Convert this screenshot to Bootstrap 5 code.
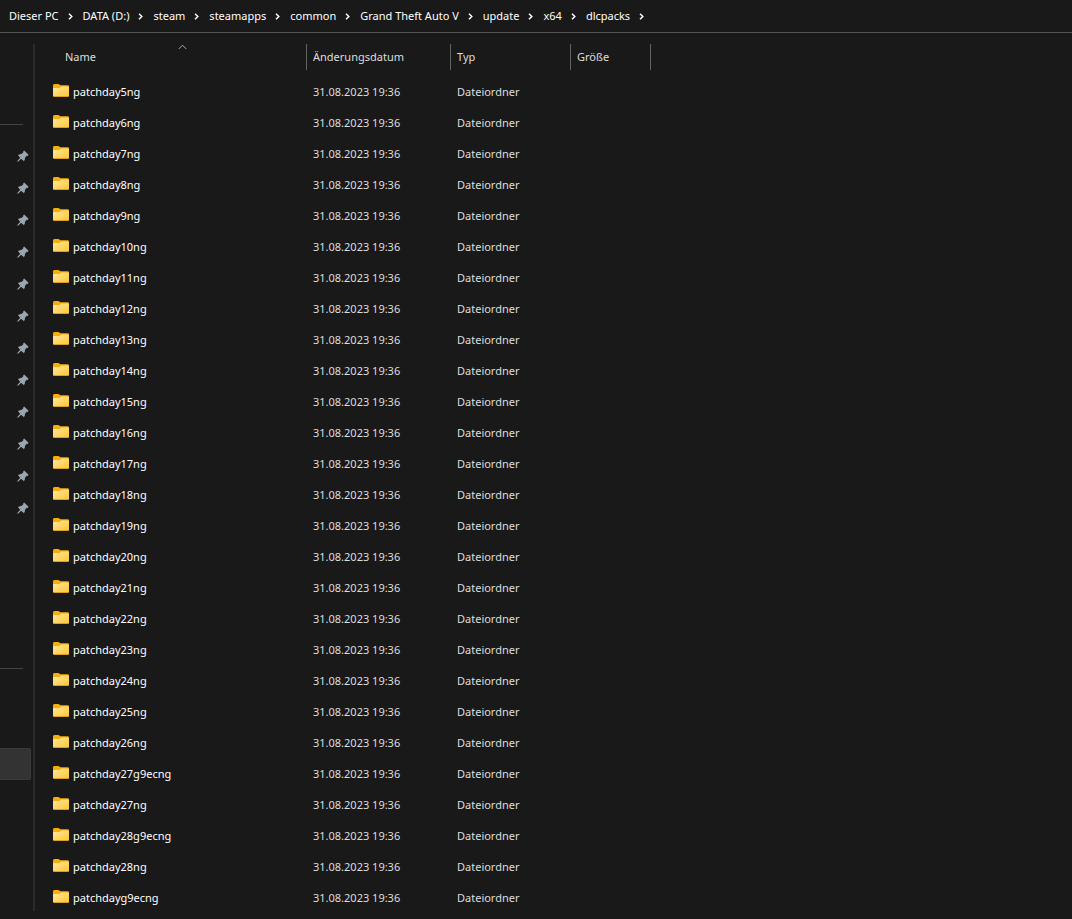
<!DOCTYPE html>
<html lang="de" data-bs-theme="dark">
<head>
<meta charset="utf-8">
<meta name="viewport" content="width=device-width, initial-scale=1">
<title>dlcpacks</title>
<link href="https://cdn.jsdelivr.net/npm/bootstrap@5.3.0/dist/css/bootstrap.min.css" rel="stylesheet">
<style>
  body { background: #191919; color: #fff; font: 11px/16px "Noto Sans", "Open Sans", sans-serif; }
  .path-bar { height: 33px; border-bottom: 1px solid #535353; padding-left: 9px; }
  .path-bar a { color: #fff; }
  .path-bar .chev { width: 5px; height: 7px; margin: 1px 10px 0 9px; }
  .side { width: 33px; height: 867px; margin-top: 11px; border-right: 2px solid #2b2b2b; box-sizing: content-box; }
  .side hr { width: 23px; margin: 0; border-top: 1px solid #454545; opacity: 1; }
  .side .pins { margin-top: 0; padding: 15px 0 144px; }
  .side .first { margin-top: 80px; }
  .side a { height: 32px; }
  .side .pins a { padding-right: 4px; }
  .side .current { width: 31px; margin-top: 79px; background: #333; border: 1px solid #3a3a3a; border-left: 0; border-radius: 0 2px 2px 0; }
  .files { width: 598px; margin: 11px 0 0 18px; table-layout: fixed; }
  .files .c-name { width: 254px; }
  .files .c-date { width: 144px; }
  .files .c-type { width: 120px; }
  .files .c-size { width: 80px; }
  .files th { height: 32px; padding: 0 0 0 6px; font-weight: 400; color: #dedede; vertical-align: top; }
  .files th:first-child { padding-left: 12px; }
  .files th > div { height: 26px; border-right: 1px solid #636363; padding-top: 5px; }
  .files td { height: 31px; padding: 0 0 0 6px; color: #dedede; vertical-align: middle; }
  .files td:first-child { padding-left: 0; }
  .files td a { color: #fff; gap: 4px; }
  .files .folder { margin-top: -3px; }
  .sort { position: absolute; left: 50%; top: 0; margin-left: -2px; }
</style>
</head>
<body>
<svg width="0" height="0" class="position-absolute" aria-hidden="true">
  <defs>
    <linearGradient id="front" x1="0" y1="0" x2="1" y2="1"><stop offset="0" stop-color="#ffe8a0"/><stop offset="1" stop-color="#ffc632"/></linearGradient>
    <symbol id="folder" viewBox="0 0 16 13">
      <path d="M0 1.5Q0 0 1.300 0H5.500L7.500 1.200H14.500Q16 1.200 16 2.500V11H0Z" fill="#f5ae0c"/>
      <path d="M0 4.800Q0 4 1 4H6.500L8.500 2.500H15Q16 2.500 16 3.300V11.800Q16 12.800 15 12.800H1Q0 12.800 0 11.800Z" fill="url(#front)"/>
      <path d="M.3 12Q.6 12.600 1.200 12.600H14.800Q15.400 12.600 15.700 12" fill="none" stroke="#e2a21c" stroke-width=".7"/>
    </symbol>
    <symbol id="pin" viewBox="0 0 12 12">
      <path d="M7.200.5 11.500 4.800 10.700 5.900 9.800 5.800 8 7.800 7.700 10.300 6.600 10.900 4.200 8.700 1.300 11.500.3 11.700.5 10.700 3.200 7.700 1.100 5.500 1.800 4.400 4.300 4.100 6.300 2.300 6.200 1.300Z" fill="#9aa5ac"/>
    </symbol>
    <symbol id="chev" viewBox="0 0 5 7"><path d="M1 .8 3.800 3.500 1 6.200" fill="none" stroke="#fff" stroke-width="1.500"/></symbol>
  </defs>
</svg>

<nav aria-label="Pfad">
  <ol class="path-bar list-unstyled d-flex align-items-center mb-0" id="path"></ol>
</nav>

<div class="d-flex align-items-start">
  <aside class="side flex-shrink-0 d-flex flex-column">
    <hr class="first">
    <nav class="pins" id="pins" aria-label="Schnellzugriff"></nav>
    <hr>
    <a href="#" class="current d-block" aria-label="DATA (D:)"></a>
  </aside>
  <main>
    <table class="files">
      <colgroup><col class="c-name"><col class="c-date"><col class="c-type"><col class="c-size"></colgroup>
      <thead>
        <tr>
          <th scope="col" class="position-relative"><div>Name</div>
            <svg class="sort" width="9" height="6" viewBox="0 0 9 6"><path d="M.7 5 4.500 1.200 8.300 5" fill="none" stroke="#aaa"/></svg></th>
          <th scope="col"><div>Änderungsdatum</div></th>
          <th scope="col"><div>Typ</div></th>
          <th scope="col"><div>Größe</div></th>
        </tr>
      </thead>
      <tbody id="rows"></tbody>
    </table>
  </main>
</div>

<script src="https://cdn.jsdelivr.net/npm/bootstrap@5.3.0/dist/js/bootstrap.bundle.min.js"></script>
<script>
  const path = ['Dieser PC', 'DATA (D:)', 'steam', 'steamapps', 'common', 'Grand Theft Auto V', 'update', 'x64', 'dlcpacks'];
  document.getElementById('path').innerHTML = path.map(p =>
    `<li class="d-flex align-items-center"><a href="#" class="text-decoration-none text-nowrap">${p}</a><svg class="chev"><use href="#chev"/></svg></li>`).join('');

  document.getElementById('pins').innerHTML = Array.from({length: 12}, (_, i) =>
    `<a href="#" class="d-flex align-items-center justify-content-end" aria-label="Angeheftet ${i + 1}"><svg width="12" height="12"><use href="#pin"/></svg></a>`).join('');

  const names = [];
  for (let n = 5; n <= 28; n++) {
    if (n >= 27) names.push(`patchday${n}g9ecng`);
    names.push(`patchday${n}ng`);
  }
  names.push('patchdayg9ecng');
  document.getElementById('rows').innerHTML = names.map(n =>
    `<tr><td><a href="#" class="d-flex align-items-center text-decoration-none"><svg class="folder" width="16" height="13"><use href="#folder"/></svg>${n}</a></td><td>31.08.2023 19:36</td><td>Dateiordner</td><td></td></tr>`).join('');
</script>
</body>
</html>
